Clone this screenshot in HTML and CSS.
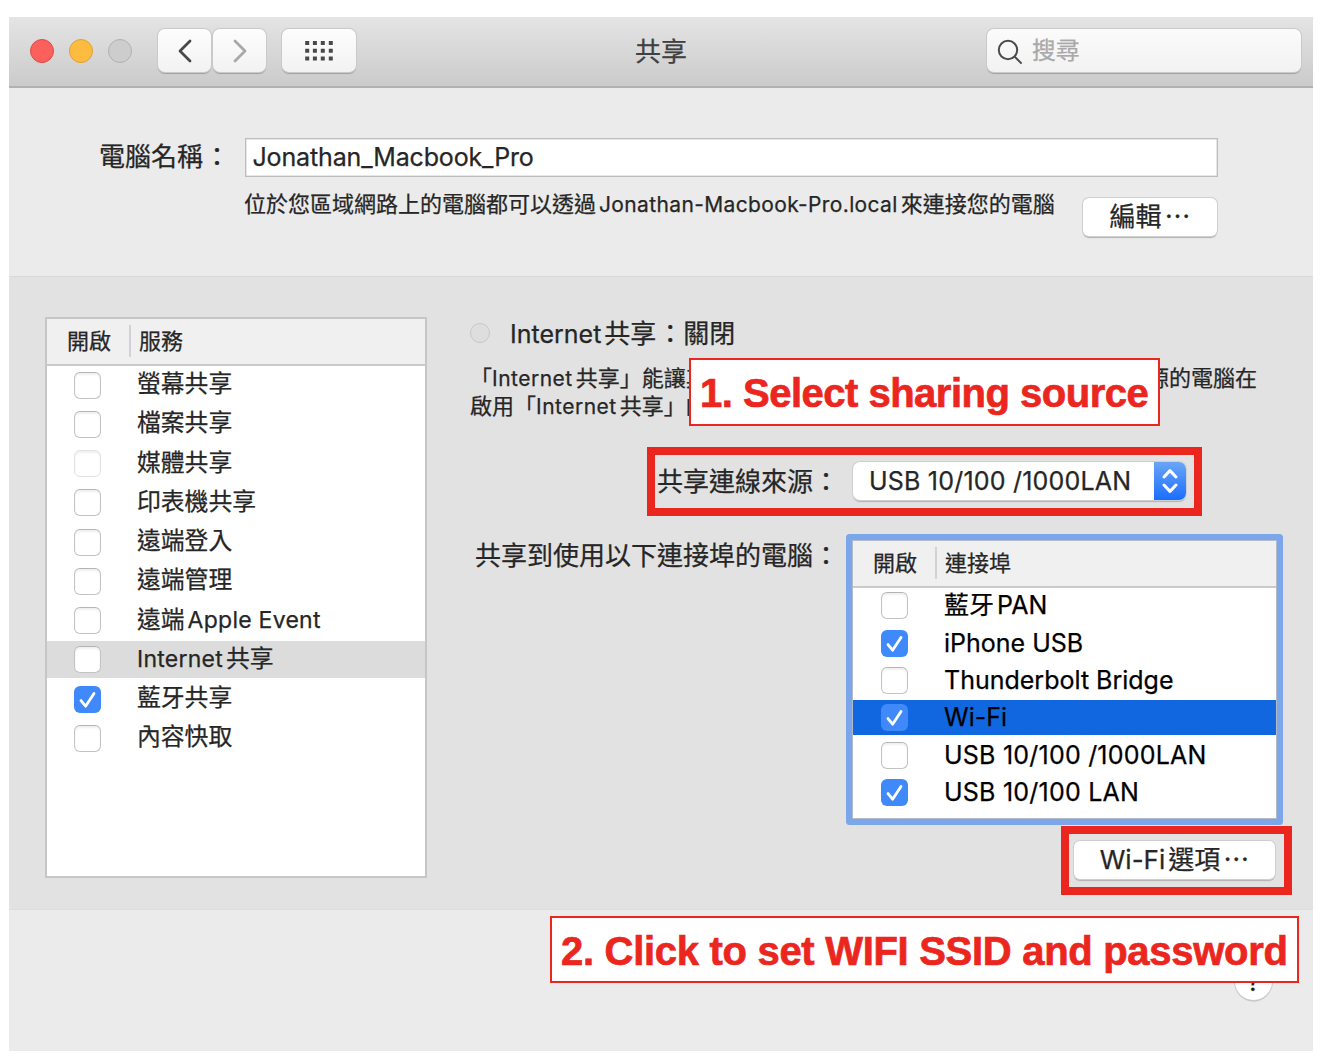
FILE: index.html
```html
<!DOCTYPE html>
<html lang="zh-Hant">
<head>
<meta charset="utf-8">
<title>共享</title>
<link rel="stylesheet" href="styles.css">
</head>
<body>
<main class="window">
  <header class="titlebar">
    <div class="lights"><i class="light red"></i><i class="light yellow"></i><i class="light off"></i></div>
    <div class="nav">
      <button class="tool back"><svg width="14" height="24" viewBox="0 0 14 24"><path d="M12 2 2 12l10 10"/></svg></button>
      <button class="tool forward"><svg width="14" height="24" viewBox="0 0 14 24"><path d="m2 2 10 10L2 22"/></svg></button>
    </div>
    <button class="tool all"><svg width="28" height="20" viewBox="0 0 28 20"><path d="M2.2 0v20M9.9 0v20M17.8 0v20M25.8 0v20" stroke-dasharray="4 3.8"/></svg></button>
    <h1 class="title">共享</h1>
    <div class="search"><svg width="26" height="26" viewBox="0 0 26 26"><circle cx="11" cy="11" r="9.2"/><path d="m17.6 17.6 7 7"/></svg><span>搜尋</span></div>
  </header>

  <section class="identity">
    <label class="name-label">電腦名稱<span class="colon">：</span></label>
    <div class="name-field">Jonathan_Macbook_Pro</div>
    <p class="name-hint">位於您區域網路上的電腦都可以透過<span class="host">Jonathan-Macbook-Pro.local</span>來連接您的電腦</p>
    <button class="push edit">編輯<span class="dots">⋯</span></button>
  </section>

  <section class="sharing">
    <div class="table services">
      <div class="thead"><span class="col-on">開啟</span><span class="col-name">服務</span></div>
      <div class="rows">
        <div class="row"><i class="check"></i><span>螢幕共享</span></div>
        <div class="row"><i class="check"></i><span>檔案共享</span></div>
        <div class="row"><i class="check dim"></i><span>媒體共享</span></div>
        <div class="row"><i class="check"></i><span>印表機共享</span></div>
        <div class="row"><i class="check"></i><span>遠端登入</span></div>
        <div class="row"><i class="check"></i><span>遠端管理</span></div>
        <div class="row"><i class="check"></i><span>遠端<b class="latin">Apple Event</b></span></div>
        <div class="row current"><i class="check"></i><span><b class="latin first">Internet</b>共享</span></div>
        <div class="row"><i class="check on"><svg width="27" height="27" viewBox="0 0 27 27"><path d="m7 14.6 4.6 5.6L20 7.4"/></svg></i><span>藍牙共享</span></div>
        <div class="row"><i class="check"></i><span>內容快取</span></div>
      </div>
    </div>

    <div class="detail">
      <h2 class="status"><i class="lamp"></i><span><b class="latin first">Internet</b>共享<span class="colon">：</span>關閉</span></h2>
      <div class="about">
        <p><span>「<b class="latin first">Internet</b>共享」能讓其</span><span>源的電腦在</span></p>
        <p><span>啟用「<b class="latin first">Internet</b>共享」的</span></p>
      </div>
      <div class="source">
        <span class="label">共享連線來源：</span>
        <div class="popup"><span class="popup-text">USB 10/100 /1000LAN</span><span class="stepper"><svg width="16" height="26" viewBox="0 0 16 26"><path d="m2 9 6-6.4L14 9M2 17l6 6.4 6-6.4"/></svg></span></div>
      </div>
      <div class="targets">
        <span class="label">共享到使用以下連接埠的電腦：</span>
        <div class="table ports">
          <div class="thead"><span class="col-on">開啟</span><span class="col-name">連接埠</span></div>
          <div class="rows">
            <div class="row"><i class="check"></i><span>藍牙<b class="latin">PAN</b></span></div>
            <div class="row"><i class="check on"><svg width="27" height="27" viewBox="0 0 27 27"><path d="m7 14.6 4.6 5.6L20 7.4"/></svg></i><span>iPhone USB</span></div>
            <div class="row"><i class="check"></i><span>Thunderbolt Bridge</span></div>
            <div class="row current"><i class="check on"><svg width="27" height="27" viewBox="0 0 27 27"><path d="m7 14.6 4.6 5.6L20 7.4"/></svg></i><span>Wi-Fi</span></div>
            <div class="row"><i class="check"></i><span class="usb">USB 10/100 /1000LAN</span></div>
            <div class="row"><i class="check on"><svg width="27" height="27" viewBox="0 0 27 27"><path d="m7 14.6 4.6 5.6L20 7.4"/></svg></i><span class="usb">USB 10/100 LAN</span></div>
          </div>
        </div>
      </div>
      <button class="push options"><b class="latin first">Wi-Fi</b>選項<span class="dots">⋯</span></button>
    </div>
  </section>

  <footer class="bottom"><button class="help">?</button></footer>

  <div class="frame frame-source"></div>
  <div class="frame frame-options"></div>
  <div class="callout callout-one"><span>1. Select sharing source</span></div>
  <div class="callout callout-two"><span>2. Click to set WIFI SSID and password</span></div>
</main>
</body>
</html>
```
FILE: styles.css
```css
* { box-sizing: border-box; }
body { margin: 0; background: #fff; color: #262626; font-family: Inter, "Noto Sans CJK TC", sans-serif; font-size: 26px; -webkit-text-stroke: .25px currentColor; }
h1, h2, p { margin: 0; font-weight: 400; }
button { font: inherit; color: inherit; border: 0; padding: 0; }
svg { display: block; fill: none; stroke: currentColor; }
.latin { font-weight: 400; margin-left: 3px; }
.latin.first { margin-left: 0; margin-right: 3px; }

.window { position: relative; width: 1304px; height: 1034px; margin: 17px 0 0 9px; background: #ebebeb; display: flex; flex-direction: column; }

.titlebar { height: 71px; flex: none; display: flex; align-items: flex-start; padding: 12px 12px 0 21px; background: linear-gradient(#e4e4e4, #cbcbcb); border-bottom: 2px solid #b1b1b1; }
.lights { display: flex; gap: 15.2px; margin-top: 9.5px; width: 128px; }
.light { width: 24px; height: 24px; flex: none; border-radius: 50%; border: 1px solid; }
.red { background: #fc605c; border-color: #e04a46; }
.yellow { background: #fdbc40; border-color: #dfa033; }
.off { background: #cdcdcd; border-color: #b1b1b1; }
.nav { display: flex; gap: 2px; }
.tool { width: 53px; height: 43px; border-radius: 7px; background: linear-gradient(#fdfdfd, #f2f2f2); box-shadow: 0 0 0 1px #c9c9c9, 0 1.5px 1px #a0a0a0; display: flex; align-items: center; justify-content: center; color: #484848; }
.tool svg { stroke-width: 2.8; stroke-linecap: round; stroke-linejoin: round; }
.forward { color: #a8a8a8; }
.all { width: 74px; margin-left: 16px; }
.all svg { stroke-width: 4; stroke-linecap: butt; }
.title { flex: 1; padding: 3px 0 0 279px; font-size: 26px; line-height: 39px; color: #404040; }
.search { width: 314px; height: 43px; border-radius: 7px; background: linear-gradient(#fbfbfb, #f2f2f2); box-shadow: 0 0 0 1px #c9c9c9, 0 1.5px 1px #a0a0a0; display: flex; align-items: center; gap: 9px; padding-left: 10px; font-size: 23.8px; line-height: 40px; color: #a9a9a9; }
.search svg { stroke: #4b4b4b; stroke-width: 2; margin-top: 2px; }

.identity { height: 189px; flex: none; padding: 50px 96px 0 90px; display: grid; grid-template-columns: 146px 836px 136px; grid-template-rows: 39px 60px; border-bottom: 1px solid #d8d8d8; }
.name-label { line-height: 38px; padding-top: 0; }
.name-field { grid-column: 2 / 4; background: #fff; border: 1px solid #bdbdbd; box-shadow: inset 0 0 0 .5px #d0d0d0; padding-left: 6.5px; font-size: 25px; line-height: 37px; letter-spacing: -.15px; width: 973px; }
.name-hint { grid-column: 2; margin-left: -1px; font-size: 22px; line-height: 32px; padding-top: 11px; white-space: nowrap; }
.host { margin: 0 3px 0 3px; font-size: 21px; letter-spacing: .36px; }
.push { height: 38px; border-radius: 6px; background: #fff; box-shadow: 0 0 0 1px #cfcfcf, 0 1.5px 1px #b2b2b2; white-space: nowrap; line-height: 36px; }
.dots { margin-left: 3px; }
.edit { width: 134px; margin: 20.5px 0 0 2px; }

.sharing { height: 633px; flex: none; background: #e2e2e2; border-bottom: 1px solid #dcdcdc; padding: 40px 30px 0 36px; display: flex; }
.table { background: #fff; }
.thead { display: flex; align-items: center; background: #f0f0f0; border-bottom: 2px solid #cacaca; font-size: 22px; line-height: 32px; }
.col-on { padding-left: 20px; width: 84px; border-right: 2px solid #d2d2d2; }
.col-name { padding-left: 8px; }
.rows { display: flex; flex-direction: column; gap: 2.25px; padding-top: .7px; }
.row { display: flex; align-items: center; height: 37px; padding-left: 27px; white-space: nowrap; }
.check { width: 27px; height: 27px; flex: none; border-radius: 6px; border: 1.5px solid #c3c3c3; border-top-color: #b5b5b5; background: #fff; box-shadow: inset 0 2px 2px #f0f0f0; }
.check.dim { border-color: #e2e2e2; }
.check.on { border: 0; background: #3f89fb; box-shadow: none; color: #fff; }
.check svg { stroke-width: 2.8; stroke-linecap: round; stroke-linejoin: round; }
.services { width: 382px; height: 561px; flex: none; border: 2px solid #c6c6c6; }
.services .thead { height: 47px; padding-bottom: 2px; }
.services .row { font-size: 23.8px; }
.services .row span { margin: -2px 0 0 36px; line-height: 34px; }
.services .latin { font-size: 23px; letter-spacing: .25px; }
.services .current { background: #dcdcdc; }

.detail { width: 820px; flex: none; margin-left: 43px; display: flex; flex-direction: column; }
.status { display: flex; align-items: center; height: 32px; font-size: 26px; line-height: 32px; }
.status > span { padding-top: 1px; }
.status .latin { font-size: 25px; }
.colon { padding-left: 1px; }
.lamp { width: 20px; height: 20px; margin-right: 20px; border: 1.5px solid #c8c8c8; border-radius: 50%; background: #dedede; }
.about { margin-top: 16px; width: 787px; font-size: 22px; line-height: 27.5px; }
.about p { display: flex; justify-content: space-between; }
.about .latin { font-size: 21px; letter-spacing: .5px; }
.source { height: 40px; margin-top: 40px; padding-left: 187px; display: flex; line-height: 37px; }
.source .label { padding-top: 3px; }
.popup { margin-left: 14px; width: 333px; height: 38px; margin-top: 2px; border-radius: 7px; background: #fff; box-shadow: 0 0 0 1px #cfcfcf, 0 1.5px 1px #b2b2b2; display: flex; overflow: hidden; color: #262626; }
.popup-text { width: 301px; padding: 1px 0 0 16px; font-size: 25px; letter-spacing: .2px; white-space: nowrap; }
.stepper { width: 32px; background: linear-gradient(#6aa6f8, #1a6dff); color: #fff; display: flex; align-items: center; justify-content: center; }
.stepper svg { stroke-width: 3; stroke-linecap: round; stroke-linejoin: round; }
.targets { display: flex; margin-top: 33px; padding-left: 5px; }
.targets .label { width: 377px; line-height: 46px; white-space: nowrap; }
.ports { width: 425px; height: 279px; margin-top: 6.5px; border: 1px solid #b4bccb; box-shadow: 0 0 0 6px #7ba7ea; border-radius: 1px; color: #000; }
.ports .thead { height: 47.5px; color: #262626; padding-bottom: 1px; }
.ports .rows { gap: 2px; padding-top: .3px; }
.ports .row { height: 35.3px; font-size: 25px; padding-left: 28px; }
.ports .row span { margin-left: 36px; line-height: 35px; }
.ports .row .usb { letter-spacing: .22px; }
.ports .current { background: #1167df; }
.options { width: 201px; margin: 22.5px 0 0 604px; }

.bottom { flex: 1; display: flex; justify-content: flex-end; padding: 53px 41px 0 0; }
.help { width: 37px; height: 37px; border-radius: 50%; background: #fff; box-shadow: 0 0 0 1px #cfcfcf, 0 1.5px 1px #b2b2b2; color: #1d1d1d; font-size: 26px; line-height: 37px; }

.frame { position: absolute; border: 8px solid #eb261f; }
.frame-source { left: 638px; top: 430px; width: 555px; height: 69px; }
.frame-options { left: 1052px; top: 809px; width: 231px; height: 69px; }
.callout { position: absolute; background: #fff; border: 2px solid #eb261f; color: #eb261f; font: bold 40px/66px "Liberation Sans", Arial, sans-serif; -webkit-text-stroke: .7px currentColor; white-space: nowrap; padding-left: 9px; }
.callout-one { left: 680px; top: 341px; width: 471px; height: 68px; letter-spacing: -.5px; }
.callout-two { left: 541px; top: 899px; width: 749px; height: 67px; letter-spacing: -.3px; }
```
